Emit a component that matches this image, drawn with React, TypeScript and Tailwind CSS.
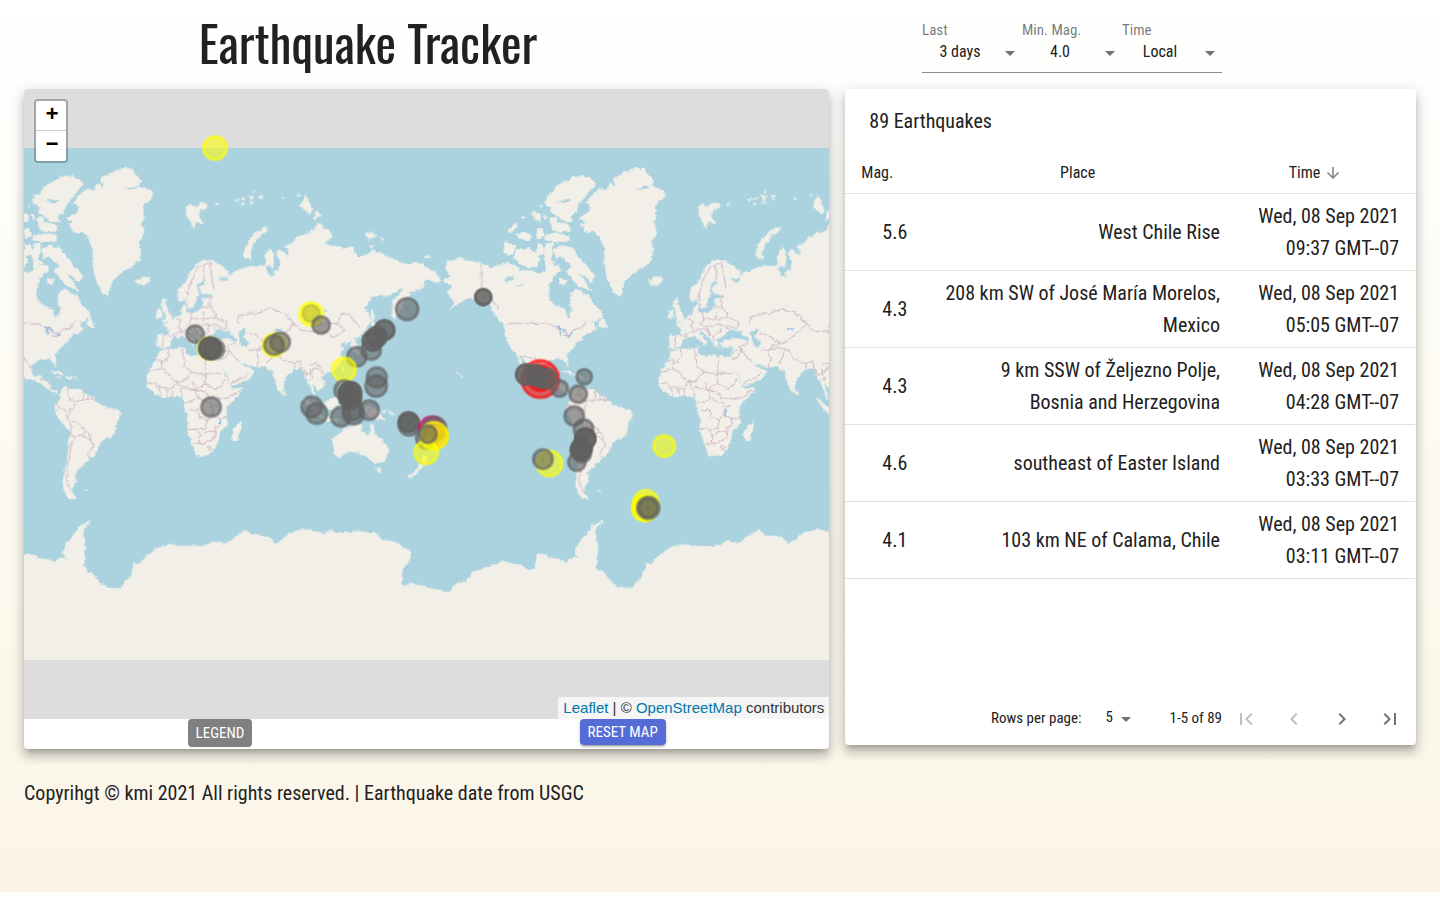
import React from 'react';

/* ---------- map drawing (three units per screen pixel) ---------- */

const WORLD = 1536;

type Shape = { dx: number; dy: number; d: string };

const LAND: Shape[] = [
  // Europe and Asia
  {
    dx: 72,
    dy: 0,
    d: 'M328 738L328 775 345 779 362 770 368 755 380 743 395 743 405 738 418 752 434 768 440 758 425 743 415 731 425 723 430 733 450 748 460 768 475 773 470 753 480 743 495 738 505 723 515 718 530 728 543 723 550 738 568 748 560 758 530 748 500 753 478 758 485 775 510 773 520 778 515 793 508 815 535 858 545 883 550 890 600 873 620 848 610 840 590 833 575 818 600 828 625 833 650 833 660 843 672 843 680 873 690 903 700 911 705 883 715 863 735 840 760 836 768 850 773 868 783 885 790 905 798 925 803 930 798 908 790 883 800 888 810 902 825 896 828 880 818 863 835 852 856 846 876 825 881 808 876 790 886 777 872 768 886 758 893 765 912 752 912 785 924 790 924 768 916 750 942 738 960 705 966 693 961 673 946 655 961 640 971 623 996 620 1026 618 1051 600 1066 597 1056 612 1036 635 1031 668 1038 690 1051 673 1061 650 1066 632 1086 612 1111 602 1131 592 1126 578 1141 570 1156 575 1171 580 1176 570 1161 550 1136 535 1111 520 1086 525 1056 522 1046 510 1026 508 1001 495 971 485 960 496 931 505 916 490 911 472 886 480 856 470 828 465 851 445 846 425 826 418 816 403 806 405 796 425 770 435 745 445 730 465 710 472 720 482 720 505 710 492 692 482 684 492 696 518 690 545 680 545 675 562 662 560 652 535 652 500 665 476 676 492 675 535 664 530 620 532 590 535 560 550 540 560 540 575 520 580 508 562 520 568 540 562 540 550 520 530 495 515 470 512 445 525 425 555 410 585 390 600 388 628 395 640 408 628 415 645 420 658 436 655 440 640 446 622 452 610 447 592 460 572 472 572 468 585 456 595 460 612 494 618 480 626 462 630 466 650 450 668 425 672 412 668 416 650 408 646 402 655 400 675 385 680 375 690 360 700 345 706 360 718 364 738Z',
  },
  // Africa
  {
    dx: 72,
    dy: 693,
    d: 'M335 92L360 88 400 82 412 82 412 100 430 110 450 105 475 108 508 112 530 165 548 200 555 207 583 203 580 215 555 240 534 262 538 290 538 312 515 335 512 360 496 388 480 405 445 408 440 390 425 350 418 325 422 300 410 265 405 240 405 232 385 226 360 230 335 230 315 215 297 200 295 180 300 155 325 120Z',
  },
  { dx: 72, dy: 693, d: 'M577 305L580 320 566 360 555 362 551 345 560 322Z M706 208L714 215 711 226 705 222Z' },
  // Britain, Ireland, Iceland
  { dx: 72, dy: 0, d: 'M345 628L356 632 352 645 372 685 366 695 343 698 352 682 346 665 338 645Z M328 662L340 662 341 684 324 688Z' },
  { dx: 0, dy: 0, d: 'M335 570L345 575 350 565 375 562 380 575 360 591 343 586Z' },
  // Svalbard, Franz Josef Land, Novaya Zemlya
  { dx: 0, dy: 0, d: 'M485 355L500 345 510 358 530 340 552 345 545 360 525 365 525 385 540 400 530 406 515 395 509 420 500 395 488 380Z' },
  { dx: 0, dy: 0, d: 'M632 333L645 330 640 340Z M650 328L665 326 656 334Z M672 322L690 318 684 332Z M685 302L692 306 686 312Z M702 322L718 320 712 330Z M676 340L688 336 684 346Z M652 342L660 344 654 350Z M572 343h9v4h-9Z M774 327h6v4h-6Z' },
  { dx: 0, dy: 0, d: 'M730 414L730 426 705 440 688 465 675 490 683 514 658 500 665 472 682 443 705 424Z' },
  // Siberian islands
  { dx: 798, dy: 0, d: 'M46 318L55 335 66 362 60 375 45 365 30 350Z M77 364L91 380 70 393Z M225 433L245 430 260 440 237 453Z M266 443L283 450 275 454Z M238 468L252 472 245 477Z M402 505L415 501 418 508 405 510Z M24 317h6v5h-6Z' },
  // Greenland
  {
    dx: 0,
    dy: 0,
    d: 'M175 310L190 300 213 305 215 288 225 282 240 298 232 270 265 250 300 238 325 240 330 252 352 275 345 292 365 298 388 312 380 328 355 350 360 380 350 400 360 430 345 460 350 480 345 515 325 530 300 545 265 575 250 622 235 610 220 580 210 550 205 515 205 480 190 440 175 428 150 430 132 405 152 400 128 385 160 370 162 350 148 340Z',
  },
  // Canadian Arctic
  {
    dx: 0,
    dy: 0,
    d: 'M110 262L140 260 165 270 178 285 160 305 140 330 125 350 120 370 100 382 106 398 82 398 62 380 45 372 46 355 28 345 30 320 48 314 62 292 95 275Z M42 405L70 400 100 410 100 424 70 430 52 424Z M26 440L60 434 98 440 96 456 60 458 24 452Z M0 375L14 380 12 396 0 398Z M2 420L18 418 22 440 4 446Z M28 464L50 462 48 490 30 486Z M0 480L22 482 24 496 0 500Z M52 484L75 470 105 475 125 500 150 530 176 560 165 582 150 565 128 550 140 570 155 590 165 606 125 588 108 570 92 545 105 530 88 515 75 500 62 512Z M42 515L55 518 50 530Z M70 568L90 572 84 588 68 582Z',
  },
  {
    dx: 798,
    dy: 0,
    d: 'M645 458L662 462 678 470 668 488 655 502 640 490Z M680 480L700 484 715 478 735 492 748 512 740 532 712 536 690 525 672 508Z M655 430L668 408 682 406 674 424Z M676 436L698 430 724 440 716 452 690 450Z M726 366L750 380 746 396 732 388Z M738 425L752 418 762 438 746 446Z M694 382L708 384 698 392Z M740 468L756 466 762 488 748 492Z M766 474L782 470 784 500 770 520 762 502Z M760 374L772 380 766 392Z M776 388L798 384 800 398 782 404Z M750 346L756 350 752 356Z',
  },
  // North America
  {
    dx: 798,
    dy: 0,
    d: 'M470 515L490 515 510 507 530 515 574 522 600 535 625 530 655 520 675 530 690 545 720 545 750 552 768 545 765 520 778 510 786 530 808 528 812 545 795 555 776 590 773 610 778 635 798 650 823 660 832 685 840 684 846 660 840 640 843 610 858 600 883 615 898 620 908 645 933 668 938 682 918 695 888 698 870 712 895 698 912 702 908 716 922 713 905 730 888 733 870 753 858 763 846 778 838 788 828 795 830 808 834 830 823 820 818 808 798 807 778 815 760 828 758 848 768 865 788 858 791 870 803 878 818 888 823 903 838 908 834 914 822 908 808 898 798 888 773 874 748 868 735 862 718 845 708 820 690 800 684 800 700 835 694 832 680 800 665 780 648 755 645 720 635 700 625 690 605 660 600 645 575 632 552 636 540 625 522 632 500 645 478 662 495 645 480 625 470 610 486 592 462 572 480 562 466 540Z',
  },
  { dx: 0, dy: 693, d: 'M190 5L200 -8 212 20 200 22 188 18Z M78 153L100 153 122 166 104 162Z M124 166L145 170 143 175 126 173Z M100 170L107 171 104 174Z M152 173h6v3h-6Z' },
  // South America
  {
    dx: 0,
    dy: 693,
    d: 'M112 208L130 198 134 207 150 207 175 210 185 225 205 228 225 250 250 262 285 270 290 285 275 310 272 335 262 350 240 358 228 370 222 385 210 407 195 408 188 402 195 420 178 432 168 445 158 450 152 465 158 485 145 500 143 518 157 534 140 536 125 520 117 490 122 460 130 420 135 370 140 340 125 320 106 298 95 278 92 262 105 240 108 225Z M180 510L190 508 188 513Z',
  },
  // Australia, New Zealand, Tasmania
  {
    dx: 798,
    dy: 693,
    d: 'M125 355L150 340 165 325 180 318 190 312 215 318 212 332 232 345 240 332 245 308 252 325 258 345 280 365 295 385 292 405 280 425 255 430 240 420 230 408 215 404 200 393 170 398 150 410 135 406 132 385Z M258 443L273 445 266 459Z M388 428L400 438 385 452 370 470 355 476 352 468 372 454 384 442Z M398 405L412 412 402 432 394 428Z',
  },
  // Japan and the islands of south-east Asia
  {
    dx: 798,
    dy: 693,
    d: 'M243 -25L250 -30 252 15 244 12Z M247 18L268 24 258 34 246 30Z M246 38L254 48 250 72 236 84 212 92 210 86 232 76 242 60Z M198 92L208 96 203 108Z M158 140L164 142 160 158Z M146 185L160 188 160 205 172 222 182 236 168 236 150 212Z M104 248L128 234 142 226 146 240 136 268 112 266Z M40 232L52 240 84 268 98 288 88 290 62 266Z M96 290L122 294 150 300 140 304 98 298Z M150 250L176 246 160 256 170 280 158 276Z M206 252L226 262 240 256 262 270 286 300 262 296 244 290 226 276Z M272 270L292 272 280 278Z M298 274L318 288 302 282Z M508 163L516 168 510 172Z M498 156h5v3h-5Z',
  },
  // Antarctica
  {
    dx: 0,
    dy: 1233,
    d: 'M0 162L20 160 40 172 70 178 90 187 108 170 130 178 115 158 130 125 150 105 165 80 200 62 176 90 182 130 180 203 205 220 230 250 250 262 285 265 320 225 330 190 345 190 370 165 400 145 435 132 480 138 540 138 580 122 605 132 640 104 665 90 690 105 735 110 757 132 800 97 850 88 900 100 920 92 940 100 1000 93 1050 100 1080 120 1110 125 1165 155 1155 180 1132 210 1135 258 1160 250 1200 258 1233 268 1276 275 1303 245 1323 245 1348 215 1383 205 1433 185 1483 192 1513 210 1538 205 1536 162 1540 162 1540 500 -4 500 -4 200Z',
  },
];

const WATER: Shape[] = [
  { dx: 72, dy: 693, d: 'M568 38L590 24 594 38 584 50 600 64 598 82 580 78 576 58Z' },
  { dx: 0, dy: 0, d: 'M298 302L330 292 348 294 326 300Z M62 336L92 330 104 336 80 341Z' },
  { dx: 798, dy: 0, d: 'M644 570L672 560 664 572 650 578Z M672 592L700 584 690 594Z M100 672L106 658 109 668Z' },
];

const BORDERS: Shape[] = [
  // Africa
  {
    dx: 72,
    dy: 693,
    d: 'M325 120L340 120M340 120L340 145 385 185M300 155L340 145M360 90L366 110 340 130M400 84L408 118 410 140 432 155 408 180 385 185M472 108L472 160 520 160M432 155L472 165 472 190 440 210 436 185M410 140L432 155M385 185L372 205 355 205 330 200 322 190 296 190M330 200L340 228M355 205L358 230M372 205L374 228M385 185L400 205 404 230M404 200L440 210 450 235 425 245 408 250M472 190L500 208 520 195 530 178M440 210L470 212 485 235 500 232M500 232L520 238 540 232 580 210M450 235L465 240 490 250 492 285 478 300 450 290 450 270 420 268M418 325L448 326 470 325 478 300M492 285L520 295 538 290M448 326L455 350 452 372 432 370M455 350L478 332 500 336 502 350 480 365 452 372M484 378L492 382 486 390 480 384ZM500 336L500 320 516 318',
  },
  // Middle East and Asia
  {
    dx: 72,
    dy: 693,
    d: 'M515 100L530 92 545 90 560 112 575 125M515 120L530 112 545 90M545 90L535 78 560 72 566 62M550 190L570 178 590 172 600 155M600 90L625 90 632 120 625 140M625 90L650 82 672 86 668 110 655 130M600 40L625 45 645 62 668 70 640 75 625 90M672 86L690 96 700 118 740 130 760 122M668 70L700 48 738 12 760 30 800 36M738 12L720 -12 690 -28 660 -34 630 -20 600 -20 568 -8 570 14M740 130L735 142M755 128L765 150 775 165M775 165L795 150 800 140 820 150 840 190M784 135L800 128 820 142M800 36L830 34 860 52 890 30 870 10 840 12 800 36M800 20L830 8 866 14 880 -22 905 -16 925 10 938 20M785 148L792 178 782 180',
  },
  // Europe
  {
    dx: 72,
    dy: 0,
    d: 'M420 660L416 620 430 570 450 535 466 528 490 520M466 528L468 572M486 522L492 570 498 600M486 620L484 652 462 654M484 652L502 672 500 685 466 690 466 668M466 690L430 688 425 670M430 688L420 705 440 712 470 706 505 710 530 720 536 700 500 685M385 688L398 694 392 712 400 728 372 738M400 728L430 718 455 740 480 730 484 708M440 712L450 738M346 742L344 778M455 740L462 758M505 725L495 712M360 739L380 744',
  },
  // North America
  { dx: 798, dy: 0, d: 'M574 522L574 595 606 632 626 660M652 703L772 703 800 712 835 735 850 722 880 714 886 700M688 800L715 803 745 812 760 838M786 868L792 876M802 876L812 884M820 896L826 902' },
  // South America
  {
    dx: 0,
    dy: 693,
    d: 'M130 205L135 232 150 245 145 268 120 272 106 262 96 250M150 245L175 240 178 212M178 240L215 236M192 226L192 242M205 228L203 242M145 268L128 290 142 318 140 340 150 352 175 345 185 330 165 310 142 300M150 352L142 372 134 430 128 480 140 515M175 345L200 360 208 378 190 402M185 330L200 348 200 360M106 262L98 274',
  },
];

const LAKES: Shape[] = [
  { dx: 0, dy: 693, d: 'M60 20L76 24 86 34M68 24L74 44M84 46L98 48 108 40' },
  { dx: 72, dy: 693, d: 'M500 255L508 258M494 268L496 286M512 296L516 312M680 30L700 26' },
];

const GREY = '#606060';
const YELLOW = '#ffff00';
const RED = '#ff0000';
const MAGENTA = '#e6006e';
const ORANGE = '#ff9a00';

// centre x, centre y, outer radius, colour, how many quakes share the spot
type Quake = [number, number, number, string, number];

const QUAKES: Quake[] = [
  [573, 177, 40, YELLOW, 1],
  [861, 673, 30, GREY, 1],
  [861, 675, 40, YELLOW, 1],
  [891, 708, 31, GREY, 1],
  [1149, 660, 38, GREY, 1],
  [1377, 624, 29, GREY, 2],
  [513, 735, 31, GREY, 1],
  [556, 778, 39, YELLOW, 1],
  [558, 778, 37, GREY, 3],
  [570, 780, 35, GREY, 1],
  [561, 954, 34, GREY, 1],
  [750, 768, 39, YELLOW, 1],
  [750, 768, 34, GREY, 1],
  [768, 759, 34, GREY, 1],
  [1081, 723, 34, GREY, 2],
  [1058, 743, 34, GREY, 2],
  [1045, 755, 34, GREY, 2],
  [1041, 783, 34, GREY, 1],
  [998, 803, 34, GREY, 1],
  [960, 841, 40, YELLOW, 1],
  [1058, 865, 35, GREY, 1],
  [1056, 891, 37, GREY, 1],
  [960, 903, 34, GREY, 1],
  [978, 911, 37, GREY, 3],
  [978, 925, 37, GREY, 3],
  [986, 962, 36, GREY, 1],
  [988, 975, 36, GREY, 1],
  [950, 983, 34, GREY, 1],
  [1035, 963, 34, GREY, 1],
  [863, 953, 36, GREY, 1],
  [878, 973, 36, GREY, 1],
  [1153, 999, 34, GREY, 2],
  [1155, 1007, 37, GREY, 1],
  [1222, 1020, 42, MAGENTA, 1],
  [1231, 1018, 40, GREY, 1],
  [1208, 1047, 37, GREY, 1],
  [1238, 1044, 36, ORANGE, 1],
  [1230, 1040, 46, YELLOW, 1],
  [1206, 1090, 40, YELLOW, 1],
  [1211, 1035, 31, GREY, 1],
  [1576, 1123, 43, YELLOW, 1],
  [1556, 1110, 34, GREY, 1],
  [1548, 870, 61, RED, 1],
  [1548, 868, 42, RED, 1],
  [1506, 856, 35, GREY, 2],
  [1534, 858, 35, GREY, 2],
  [1548, 868, 33, GREY, 1],
  [1568, 868, 33, GREY, 2],
  [1606, 898, 30, GREY, 1],
  [1680, 863, 28, GREY, 1],
  [1662, 915, 31, GREY, 1],
  [1650, 981, 34, GREY, 1],
  [1678, 1020, 34, GREY, 1],
  [1683, 1049, 35, GREY, 3],
  [1672, 1078, 35, GREY, 3],
  [1668, 1084, 33, GREY, 2],
  [1674, 1094, 31, GREY, 1],
  [1658, 1119, 31, GREY, 1],
  [1920, 1071, 37, YELLOW, 1],
  [1865, 1241, 43, YELLOW, 1],
  [1862, 1257, 43, YELLOW, 2],
  [1872, 1256, 38, GREY, 1],
  [1872, 1256, 33, GREY, 1],
];

function Shapes({ items }: { items: Shape[] }) {
  return (
    <>
      {items.map((s, i) => (
        <path key={i} d={s.d} transform={`translate(${s.dx} ${s.dy})`} />
      ))}
    </>
  );
}

function WorldCopy({ offset }: { offset: number }) {
  return (
    <g transform={`translate(${offset} 0)`}>
      <g fill="#f2efe9" stroke="#f2efe9" strokeWidth="2">
        <Shapes items={LAND} />
      </g>
      <g fill="#aad3df">
        <Shapes items={WATER} />
      </g>
      <g fill="none" stroke="#cfb9c7" strokeWidth="3">
        <Shapes items={BORDERS} />
      </g>
      <g fill="none" stroke="#8fb9dc" strokeWidth="4">
        <Shapes items={LAKES} />
      </g>
    </g>
  );
}

function WorldMap() {
  return (
    <svg
      viewBox="0 0 2415 1890"
      preserveAspectRatio="xMinYMin slice"
      className="block h-full w-full"
      role="img"
      aria-label="World map of earthquakes"
    >
      <defs>
        <filter id="coast" filterUnits="userSpaceOnUse" x="-60" y="150" width="2540" height="1600">
          <feTurbulence type="fractalNoise" baseFrequency="0.07" numOctaves="3" seed="4" />
          <feDisplacementMap in="SourceGraphic" scale="14" xChannelSelector="R" yChannelSelector="G" />
        </filter>
        <clipPath id="tiles">
          <rect x="-600" y="177" width="3600" height="1535" />
        </clipPath>
      </defs>
      <rect x="-600" y="177" width="3600" height="1535" fill="#aad3df" />
      <g clipPath="url(#tiles)">
        <g filter="url(#coast)">
          <WorldCopy offset={-WORLD} />
          <WorldCopy offset={0} />
          <WorldCopy offset={WORLD} />
        </g>
      </g>
      {QUAKES.map(([x, y, r, color, count], i) =>
        Array.from({ length: count }, (_, n) => (
          <g key={`${i}-${n}`} fill={color} stroke={color}>
            <circle cx={x} cy={y} r={r - 5} strokeWidth="9" fillOpacity="0.58" strokeOpacity="0.6" />
            <circle cx={x} cy={y} r="3" stroke="none" fillOpacity="0.35" />
          </g>
        )),
      )}
    </svg>
  );
}

/* ---------- small parts ---------- */

function Icon({ d, className }: { d: string; className: string }) {
  return (
    <svg viewBox="0 0 24 24" fill="currentColor" aria-hidden="true" className={className}>
      <path d={d} />
    </svg>
  );
}

const ARROW_DROP = 'M7 10l5 5 5-5z';
const ARROW_DOWN = 'M20 12l-1.41-1.41L13 16.17V4h-2v12.17l-5.58-5.59L4 12l8 8 8-8z';

function Filter({ id, label, options }: { id: string; label: string; options: string[] }) {
  return (
    <div className="flex w-[100px] flex-col border-b border-[#8c8c8c]">
      <label htmlFor={id} className="text-[15px] leading-5 text-black/55">
        {label}
      </label>
      <div className="relative pb-2">
        <select
          id={id}
          className="h-6 w-full appearance-none bg-transparent pr-6 text-center text-base leading-6 outline-none"
        >
          {options.map((o) => (
            <option key={o}>{o}</option>
          ))}
        </select>
        <Icon d={ARROW_DROP} className="pointer-events-none absolute top-px right-0 size-6 text-black/55" />
      </div>
    </div>
  );
}

const ROWS = [
  { mag: '5.6', place: 'West Chile Rise', day: 'Wed, 08 Sep 2021', time: '09:37 GMT--07' },
  { mag: '4.3', place: '208 km SW of José María Morelos, Mexico', day: 'Wed, 08 Sep 2021', time: '05:05 GMT--07' },
  { mag: '4.3', place: '9 km SSW of Željezno Polje, Bosnia and Herzegovina', day: 'Wed, 08 Sep 2021', time: '04:28 GMT--07' },
  { mag: '4.6', place: 'southeast of Easter Island', day: 'Wed, 08 Sep 2021', time: '03:33 GMT--07' },
  { mag: '4.1', place: '103 km NE of Calama, Chile', day: 'Wed, 08 Sep 2021', time: '03:11 GMT--07' },
];

const PAGER = [
  { label: 'First page', d: 'M18.41 16.59L13.82 12l4.59-4.59L17 6l-6 6 6 6zM6 6h2v12H6z', disabled: true },
  { label: 'Previous page', d: 'M15.41 16.59L10.83 12l4.58-4.59L14 6l-6 6 6 6 1.41-1.41z', disabled: true },
  { label: 'Next page', d: 'M8.59 16.59L13.17 12 8.59 7.41 10 6l6 6-6 6-1.41-1.41z', disabled: false },
  { label: 'Last page', d: 'M5.59 7.41L10.18 12l-4.59 4.59L7 18l6-6-6-6zM16 6h2v12h-2z', disabled: false },
];

function MapCard() {
  return (
    <section className="col-span-7 self-start overflow-hidden rounded bg-white shadow-[0_5px_5px_-3px_rgba(0,0,0,0.2),0_8px_10px_1px_rgba(0,0,0,0.14),0_3px_14px_2px_rgba(0,0,0,0.12)]">
      <div className="relative h-[630px] bg-[#dddddd]">
        <WorldMap />
        <div className="absolute top-2.5 left-2.5 flex flex-col overflow-hidden rounded border-2 border-black/25 bg-clip-padding font-['Liberation_Mono',monospace] text-[22px] font-bold text-black">
          <button type="button" aria-label="Zoom in" className="h-[30px] w-[30px] border-b border-[#cccccc] bg-white pl-0.5 leading-[28px]">
            +
          </button>
          <button type="button" aria-label="Zoom out" className="h-[30px] w-[30px] bg-white pl-0.5 leading-[28px]">
            −
          </button>
        </div>
        <div className="absolute right-0 bottom-0 bg-white/70 px-[5px] font-['Liberation_Sans',Arial,sans-serif] text-[15px] leading-[22px] text-[#333333]">
          <a href="#leaflet" className="text-[#0078a8]">Leaflet</a> | ©{' '}
          <a href="#osm" className="text-[#0078a8]">OpenStreetMap</a> contributors
        </div>
      </div>
      <div className="flex h-[30px] items-start justify-around text-[15px] text-white">
        <button type="button" className="h-7 rounded bg-[#808080] px-2">
          LEGEND
        </button>
        <button
          type="button"
          className="h-[26px] rounded bg-[#556cd6] px-2 shadow-[0_3px_1px_-2px_rgba(0,0,0,0.2),0_2px_2px_0_rgba(0,0,0,0.14),0_1px_5px_0_rgba(0,0,0,0.12)]"
        >
          RESET MAP
        </button>
      </div>
    </section>
  );
}

function TableCard() {
  return (
    <section className="col-span-5 self-start rounded bg-white pr-px shadow-[0_5px_5px_-3px_rgba(0,0,0,0.2),0_8px_10px_1px_rgba(0,0,0,0.14),0_3px_14px_2px_rgba(0,0,0,0.12)]">
      <h2 className="flex h-16 items-center px-6 text-xl">89 Earthquakes</h2>
      <table className="w-full border-collapse">
        <colgroup>
          <col className="w-[78px]" />
          <col />
          <col className="w-[179px]" />
        </colgroup>
        <thead>
          <tr className="h-10 border-b border-[#e0e0e0] text-base">
            <th scope="col" className="pl-4 text-left font-normal">Mag.</th>
            <th scope="col" className="pr-1 text-center font-normal">Place</th>
            <th scope="col" className="font-normal" aria-sort="descending">
              <button type="button" className="mr-5 inline-flex items-center gap-1">
                Time
                <Icon d={ARROW_DOWN} className="size-[18px] text-black/50" />
              </button>
            </th>
          </tr>
        </thead>
        <tbody className="text-right text-xl leading-8">
          {ROWS.map((r) => (
            <tr key={r.time} className="border-b border-[#e0e0e0]">
              <td className="px-4 py-1.5">{r.mag}</td>
              <td className="py-1.5 pr-4 pl-5">{r.place}</td>
              <td className="px-4 py-1.5">
                {r.day}
                <br />
                {r.time}
              </td>
            </tr>
          ))}
        </tbody>
      </table>
      <div className="mt-[114px] flex h-[52px] items-center justify-end pr-px text-[15px]">
        <label htmlFor="rows">Rows per page:</label>
        <div className="relative mr-8 ml-4 flex items-center pb-0.5">
          <select id="rows" className="h-6 w-10 appearance-none bg-transparent pr-6 pl-2 outline-none">
            <option>5</option>
            <option>10</option>
          </select>
          <Icon d={ARROW_DROP} className="pointer-events-none absolute top-px right-0 size-6 text-black/55" />
        </div>
        <span>1-5 of 89</span>
        {PAGER.map((p) => (
          <button
            key={p.label}
            type="button"
            aria-label={p.label}
            disabled={p.disabled}
            className="p-3 text-black/55 disabled:text-black/25"
          >
            <Icon d={p.d} className="size-6" />
          </button>
        ))}
      </div>
    </section>
  );
}

export default function App() {
  return (
    <div className="bg-[linear-gradient(to_bottom,#ffffff,#fbf8ec_70%,#fbf6e9_92%,#fdf3e7_97%)] px-6 pb-[83px] font-['Roboto_Condensed','Liberation_Sans_Narrow',Roboto,sans-serif] text-[#212121]">
      <header className="grid grid-cols-2 gap-4 pb-4">
        <h1 className="pt-3 text-center font-['Oswald','Roboto_Condensed','Liberation_Sans_Narrow',sans-serif] text-[49px] leading-[61px]">
          Earthquake Tracker
        </h1>
        <form className="flex items-end justify-center">
          <Filter id="last" label="Last" options={['3 days', '7 days', '30 days']} />
          <Filter id="min-mag" label="Min. Mag." options={['4.0', '5.0', '6.0']} />
          <Filter id="time" label="Time" options={['Local', 'UTC']} />
        </form>
      </header>
      <main className="grid grid-cols-12 gap-4">
        <MapCard />
        <TableCard />
      </main>
      <footer className="pt-7 text-xl leading-8">
        Copyrihgt © kmi 2021 All rights reserved. | Earthquake date from USGC
      </footer>
    </div>
  );
}
